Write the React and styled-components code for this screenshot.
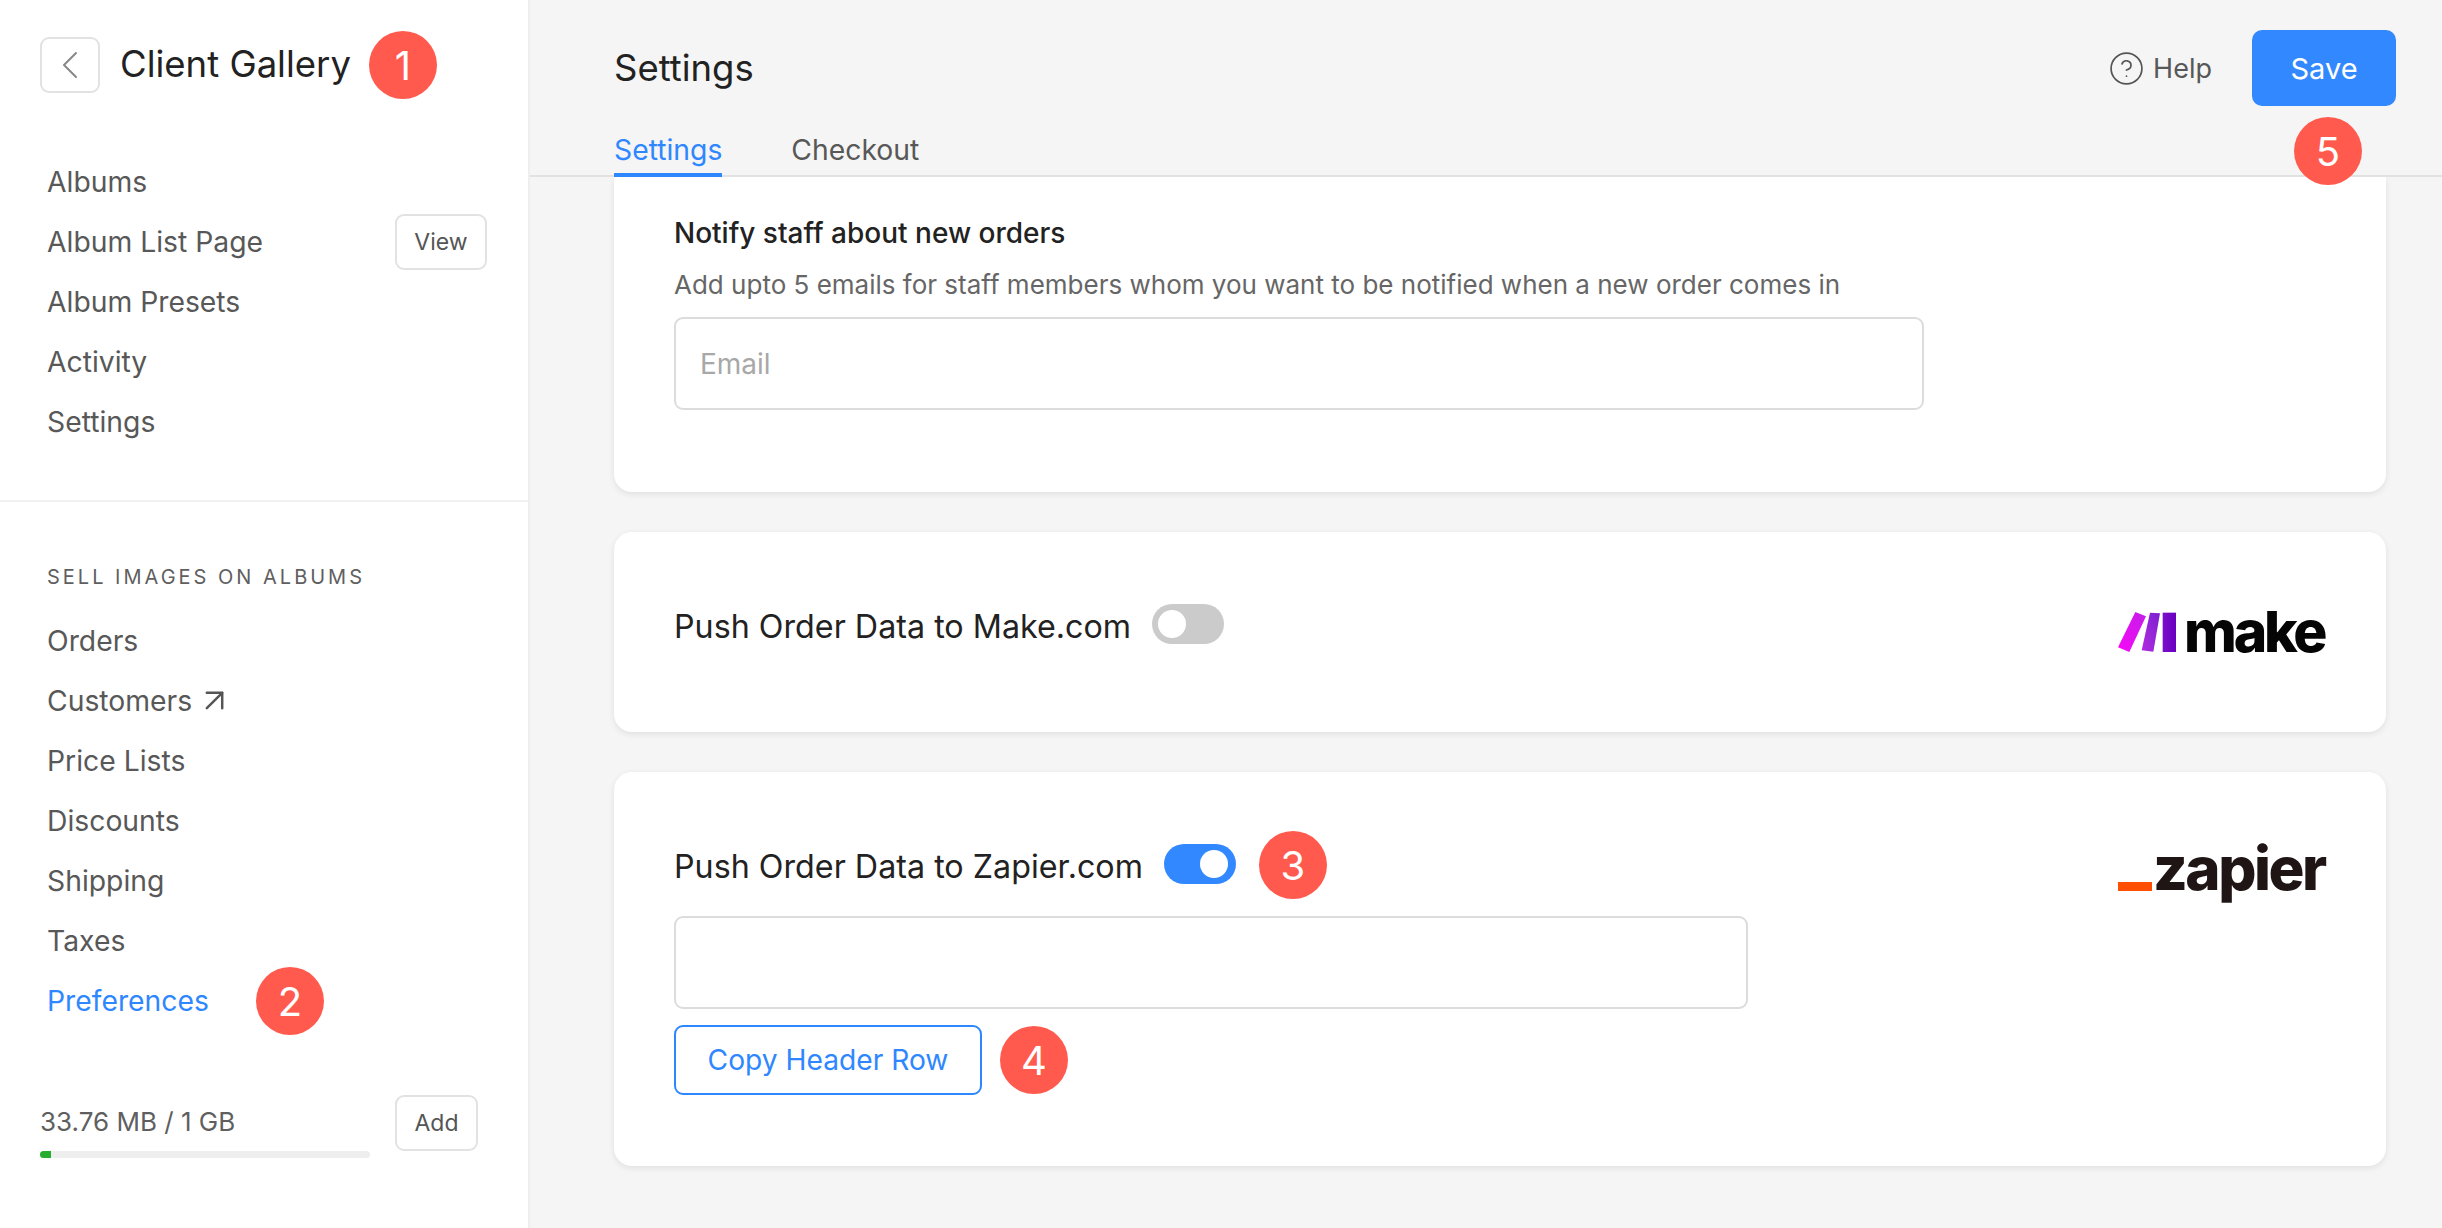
import React from 'react';
import styled, { createGlobalStyle } from 'styled-components';
import { ArrowUpRight, ChevronLeft, CircleHelp } from 'lucide-react';

const GlobalStyle = createGlobalStyle`
  html, body {
    margin: 0;
    padding: 0;
    background: #f5f5f5;
  }
  * {
    box-sizing: border-box;
  }
`;

const topLinks = ['Albums', 'Album List Page', 'Album Presets', 'Activity', 'Settings'];

export default function App() {
  return (
    <>
      <GlobalStyle />
      <Page>
        <Sidebar>
          <TitleRow>
            <BackButton>
              <ChevronLeft size={48} strokeWidth={1} color="#888" />
            </BackButton>
            <SidebarTitle>Client Gallery</SidebarTitle>
            <Badge>1</Badge>
          </TitleRow>

          <TopNav>
            {topLinks.map((link) => (
              <NavRow key={link}>
                <NavLink>{link}</NavLink>
                {link === 'Album List Page' && <ViewButton>View</ViewButton>}
              </NavRow>
            ))}
          </TopNav>

          <Divider />

          <SectionLabel>SELL IMAGES ON ALBUMS</SectionLabel>
          <NavRow><NavLink>Orders</NavLink></NavRow>
          <NavRow>
            <NavLink>Customers</NavLink>
            <ExternalIcon>
              <ArrowUpRight size={37} strokeWidth={1.6} color="#555" />
            </ExternalIcon>
          </NavRow>
          <NavRow><NavLink>Price Lists</NavLink></NavRow>
          <NavRow><NavLink>Discounts</NavLink></NavRow>
          <NavRow><NavLink>Shipping</NavLink></NavRow>
          <NavRow><NavLink>Taxes</NavLink></NavRow>
          <NavRow>
            <NavLink $active>Preferences</NavLink>
            <PreferencesBadge>2</PreferencesBadge>
          </NavRow>

          <Storage>
            <StorageInfo>
              <StorageText>33.76 MB / 1 GB</StorageText>
              <StorageTrack>
                <StorageFill style={{ width: `${(11 / 330) * 100}%` }} />
              </StorageTrack>
            </StorageInfo>
            <AddButton>Add</AddButton>
          </Storage>
        </Sidebar>

        <Main>
          <Header>
            <div>
              <PageTitle>Settings</PageTitle>
              <Tabs>
                <Tab $active>Settings</Tab>
                <Tab>Checkout</Tab>
              </Tabs>
            </div>
            <Actions>
              <Help>
                <CircleHelp size={37} strokeWidth={1.1} color="#555" />
                Help
              </Help>
              <SaveWrap>
                <SaveButton>Save</SaveButton>
                <SaveBadge>5</SaveBadge>
              </SaveWrap>
            </Actions>
          </Header>

          <Content>
            <NotifyCard>
              <CardHeading>Notify staff about new orders</CardHeading>
              <CardHint>Add upto 5 emails for staff members whom you want to be notified when a new order comes in</CardHint>
              <EmailInput placeholder="Email" readOnly />
            </NotifyCard>

            <IntegrationCard $height={200}>
              <PushRow>
                <PushLabel>Push Order Data to Make.com</PushLabel>
                <Toggle />
              </PushRow>
              <MakeLogo>
                <MakeMark width="58" height="40" viewBox="0 0 174 120">
                  <defs>
                    <linearGradient id="makeA" x1="0" y1="1" x2="1" y2="0">
                      <stop offset="0" stopColor="#f708f7" />
                      <stop offset="1" stopColor="#c31ee8" />
                    </linearGradient>
                    <linearGradient id="makeB" x1="0" y1="1" x2="1" y2="0">
                      <stop offset="0" stopColor="#b22be0" />
                      <stop offset="1" stopColor="#7a20d0" />
                    </linearGradient>
                    <linearGradient id="makeC" x1="0" y1="0" x2="1" y2="0">
                      <stop offset="0" stopColor="#7a10c8" />
                      <stop offset="1" stopColor="#6a00c0" />
                    </linearGradient>
                  </defs>
                  <polygon points="52,0 84,13 34,120 0,106" fill="url(#makeA)" />
                  <polygon points="96,2 126,4 106,119 71,115" fill="url(#makeB)" />
                  <polygon points="134,2 174,2 174,120 134,120" fill="url(#makeC)" />
                </MakeMark>
                <MakeWord>make</MakeWord>
              </MakeLogo>
            </IntegrationCard>

            <IntegrationCard $height={394}>
              <div>
                <PushRow>
                  <PushLabel>Push Order Data to Zapier.com</PushLabel>
                  <Toggle $on />
                  <Badge>3</Badge>
                </PushRow>
                <HeaderInput readOnly />
                <CopyRow>
                  <CopyButton>Copy Header Row</CopyButton>
                  <Badge>4</Badge>
                </CopyRow>
              </div>
              <ZapierLogo>
                <ZapierDash />
                <ZapierWord>zapier</ZapierWord>
              </ZapierLogo>
            </IntegrationCard>
          </Content>
        </Main>
      </Page>
    </>
  );
}

const Page = styled.div`
  display: flex;
  width: 2442px;
  height: 1228px;
  overflow: hidden;
  font-family: Inter, 'Liberation Sans', sans-serif;
  background: #f5f5f5;
`;

const Sidebar = styled.aside`
  width: 530px;
  flex-shrink: 0;
  padding: 37px 0 0;
  background: #fff;
  border-right: 2px solid #eeeeee;
`;

const TitleRow = styled.div`
  display: flex;
  align-items: center;
  height: 56px;
  padding-left: 40px;
`;

const BackButton = styled.div`
  display: flex;
  align-items: center;
  justify-content: center;
  width: 60px;
  height: 56px;
  margin-right: 20px;
  border: 2px solid #e2e2e2;
  border-radius: 9px;
`;

const SidebarTitle = styled.h1`
  margin: 0 18px 2px 0;
  font-size: 36.5px;
  font-weight: 400;
  color: #222;
  white-space: nowrap;
`;

const Badge = styled.span`
  display: flex;
  align-items: center;
  justify-content: center;
  flex-shrink: 0;
  width: 68px;
  height: 68px;
  margin: -14px 0;
  border-radius: 50%;
  background: #ff5a4d;
  color: #fff;
  font-size: 40px;
  font-weight: 400;
`;

const TopNav = styled.nav`
  margin-top: 59px;
`;

const NavRow = styled.div`
  display: flex;
  align-items: center;
  justify-content: flex-start;
  height: 60px;
  padding: 0 41px 0 47px;
`;

const NavLink = styled.a`
  font-size: 28.3px;
  font-weight: 400;
  white-space: nowrap;
  color: ${(p) => (p.$active ? '#2f87ff' : '#585858')};
`;

const SmallButton = styled.button`
  display: flex;
  align-items: center;
  justify-content: center;
  height: 56px;
  padding: 0;
  border: 2px solid #e2e2e2;
  border-radius: 9px;
  background: #fff;
  color: #555;
  font-family: inherit;
  font-size: 23px;
`;

const ViewButton = styled(SmallButton)`
  width: 92px;
  margin-left: auto;
`;

const AddButton = styled(SmallButton)`
  width: 83px;
  margin-left: 25px;
`;

const ExternalIcon = styled.span`
  display: flex;
  margin-left: 4px;
  margin-top: -2px;
`;

const PreferencesBadge = styled(Badge)`
  margin-left: 47px;
`;

const Divider = styled.div`
  height: 2px;
  margin-top: 48px;
  background: #f1f1f1;
`;

const SectionLabel = styled.div`
  margin: 62px 0 21px 47px;
  line-height: 26px;
  font-size: 20px;
  letter-spacing: 3px;
  color: #5f5f5f;
`;

const Storage = styled.div`
  display: flex;
  align-items: flex-start;
  margin-top: 64px;
  padding-left: 40px;
`;

const StorageInfo = styled.div`
  width: 330px;
`;

const StorageText = styled.div`
  height: 54px;
  line-height: 54px;
  font-size: 26px;
  color: #5f5f5f;
`;

const StorageTrack = styled.div`
  height: 7px;
  margin-top: 2px;
  border-radius: 4px;
  background: #eeeeee;
  overflow: hidden;
`;

const StorageFill = styled.div`
  height: 100%;
  background: #27ae2e;
`;

const Main = styled.main`
  flex: 1;
  min-width: 0;
`;

const Header = styled.header`
  position: relative;
  z-index: 2;
  display: flex;
  justify-content: space-between;
  height: 177px;
  padding: 30px 46px 0 84px;
  border-bottom: 2px solid #e2e2e2;
`;

const PageTitle = styled.h2`
  margin: 16px 0 0;
  line-height: 44px;
  font-size: 36.5px;
  font-weight: 400;
  color: #222;
`;

const Tabs = styled.div`
  display: flex;
  gap: 69px;
  margin-top: 40px;
`;

const Tab = styled.div`
  height: 47px;
  line-height: 40px;
  font-size: 28.3px;
  color: ${(p) => (p.$active ? '#2f87ff' : '#585858')};
  border-bottom: 4px solid ${(p) => (p.$active ? '#2f87ff' : 'transparent')};
`;

const Actions = styled.div`
  display: flex;
  align-items: flex-start;
  gap: 40px;
`;

const Help = styled.div`
  display: flex;
  align-items: center;
  gap: 8px;
  height: 76px;
  font-size: 27px;
  color: #585858;
`;

const SaveWrap = styled.div`
  position: relative;
`;

const SaveButton = styled.button`
  display: block;
  width: 144px;
  height: 76px;
  border: 0;
  border-radius: 10px;
  background: #3288ff;
  color: #fff;
  font-family: inherit;
  font-size: 29px;
`;

const SaveBadge = styled(Badge)`
  position: absolute;
  left: 42px;
  top: 87px;
  margin: 0;
`;

const Content = styled.div`
  display: flex;
  flex-direction: column;
  gap: 40px;
  padding: 0 56px 0 84px;
`;

const Card = styled.section`
  background: #fff;
  border-radius: 18px;
  box-shadow: 0 2px 6px rgba(0, 0, 0, 0.09);
`;

const NotifyCard = styled(Card)`
  height: 315px;
  padding: 37px 60px 0;
  border-radius: 0 0 18px 18px;
`;

const CardHeading = styled.h3`
  margin: 0;
  line-height: 38px;
  font-size: 28px;
  font-weight: 500;
  color: #222;
`;

const CardHint = styled.p`
  margin: 15px 0 14px;
  line-height: 36px;
  font-size: 26px;
  color: #666;
`;

const EmailInput = styled.input`
  display: block;
  width: 1250px;
  height: 93px;
  padding: 0 24px;
  border: 2px solid #dcdcdc;
  border-radius: 9px;
  outline: none;
  font-family: inherit;
  font-size: 28px;
  color: #222;

  &::placeholder {
    color: #a8a8a8;
  }
`;

const IntegrationCard = styled(Card)`
  display: flex;
  align-items: flex-start;
  justify-content: space-between;
  height: ${(p) => p.$height}px;
  padding: 72px 60px 0;
`;

const PushRow = styled.div`
  display: flex;
  align-items: flex-start;
  height: 40px;
  gap: 21px;

  & > span {
    margin-top: -13px;
    margin-left: 2px;
  }
`;

const PushLabel = styled.div`
  margin-top: 3px;
  line-height: 40px;
  font-size: 32.25px;
  white-space: nowrap;
  color: #222;
`;

const Toggle = styled.div`
  position: relative;
  flex-shrink: 0;
  width: 72px;
  height: 40px;
  border-radius: 20px;
  background: ${(p) => (p.$on ? '#3288ff' : '#cbcbcb')};

  &::after {
    content: '';
    position: absolute;
    top: 6px;
    left: ${(p) => (p.$on ? '36px' : '6px')};
    width: 28px;
    height: 28px;
    border-radius: 50%;
    background: #fff;
  }
`;

const HeaderInput = styled.input`
  display: block;
  width: 1074px;
  height: 93px;
  margin-top: 32px;
  border: 2px solid #dcdcdc;
  border-radius: 9px;
  outline: none;
`;

const CopyRow = styled.div`
  display: flex;
  align-items: center;
  gap: 18px;
  margin-top: 16px;
`;

const CopyButton = styled.button`
  width: 308px;
  height: 70px;
  padding: 0;
  border: 2px solid #2f87ff;
  border-radius: 9px;
  background: #fff;
  color: #2f87ff;
  font-family: inherit;
  font-size: 28.2px;
`;

const MakeLogo = styled.div`
  display: flex;
  align-items: flex-end;
  gap: 8px;
  width: 208px;
  height: 40px;
  margin-top: 8px;
`;

const MakeMark = styled.svg`
  flex-shrink: 0;
`;

const MakeWord = styled.span`
  font-size: 57px;
  line-height: 40px;
  height: 40px;
  font-weight: 800;
  letter-spacing: -3.2px;
  white-space: nowrap;
  color: #050505;
`;

const ZapierLogo = styled.div`
  display: flex;
  align-items: flex-end;
  width: 208px;
  height: 55px;
`;

const ZapierDash = styled.div`
  flex-shrink: 0;
  width: 34px;
  height: 9px;
  margin-bottom: 8px;
  background: #ff4f00;
`;

const ZapierWord = styled.span`
  margin-left: 1px;
  margin-bottom: 3px;
  font-size: 60px;
  line-height: 55px;
  height: 55px;
  font-weight: 800;
  letter-spacing: -2.5px;
  white-space: nowrap;
  color: #201515;
`;
